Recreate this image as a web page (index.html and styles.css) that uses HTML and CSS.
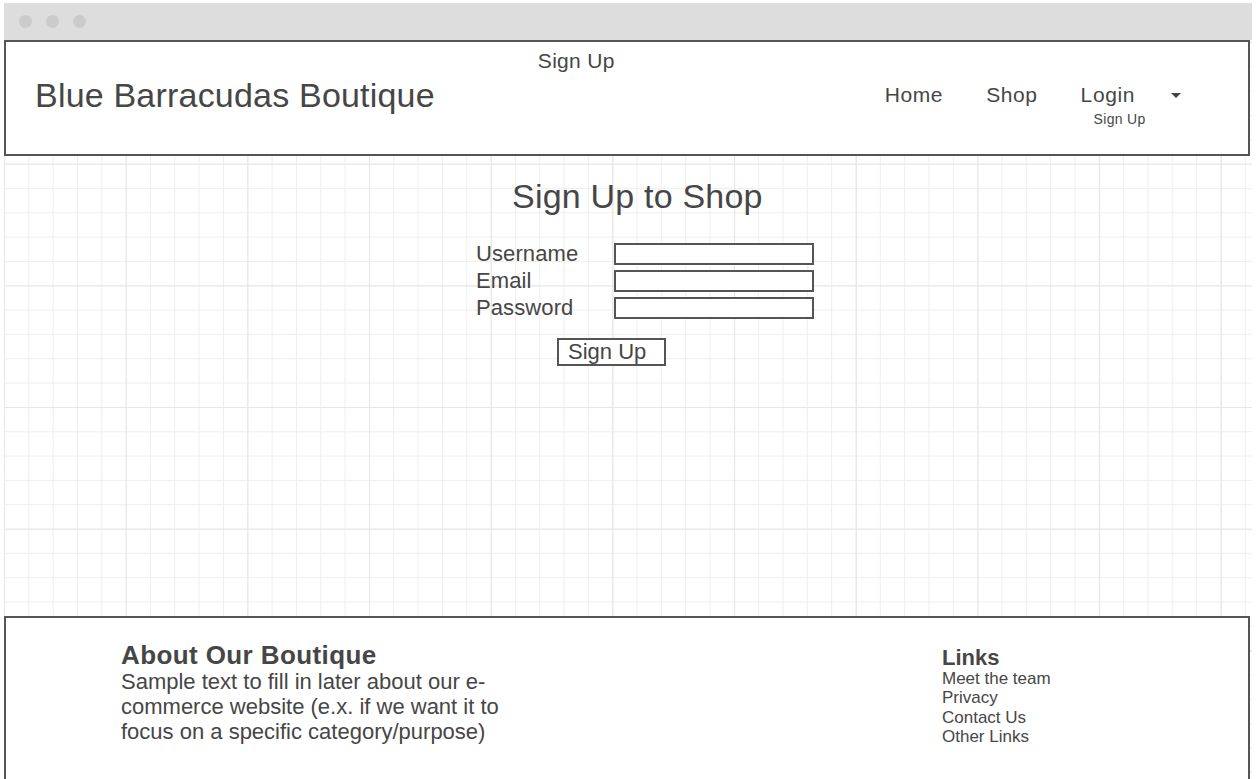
FILE: index.html
```html
<!DOCTYPE html>
<html lang="en">
<head>
<meta charset="utf-8">
<title>Blue Barracudas Boutique - Sign Up</title>
<link rel="stylesheet" href="styles.css">
</head>
<body>
<div class="window">
  <div class="chrome">
    <span class="dot"></span><span class="dot"></span><span class="dot"></span>
  </div>
  <div class="canvas">
    <header class="site-header">
      <div class="brand">Blue Barracudas Boutique</div>
      <div class="top-link">Sign Up</div>
      <nav class="nav">
        <a class="nav-item">Home</a>
        <a class="nav-item">Shop</a>
        <div class="nav-item login">Login
          <div class="submenu">Sign Up</div>
        </div>
        <span class="caret"></span>
      </nav>
    </header>
    <main class="main">
      <div class="content">
        <h1 class="title">Sign Up to Shop</h1>
        <form class="form">
          <label class="label">Username</label><span class="field"></span>
          <label class="label">Email</label><span class="field"></span>
          <label class="label">Password</label><span class="field"></span>
        </form>
        <div class="button">Sign Up</div>
      </div>
    </main>
    <footer class="site-footer">
      <div class="about">
        <h2 class="about-title">About Our Boutique</h2>
        <p class="about-text">Sample text to fill in later about our e-commerce website (e.x. if we want it to focus on a specific category/purpose)</p>
      </div>
      <div class="links">
        <h3 class="links-title">Links</h3>
        <ul class="link-list">
          <li>Meet the team</li>
          <li>Privacy</li>
          <li>Contact Us</li>
          <li>Other Links</li>
        </ul>
      </div>
    </footer>
  </div>
</div>
</body>
</html>
```

FILE: styles.css
```css
* { box-sizing: border-box; }
html, body { margin: 0; padding: 0; background: #ffffff; }
body {
  font-family: "Liberation Sans", Arial, sans-serif;
  color: #464646;
  overflow: hidden;
  height: 779px;
}
.window {
  margin: 3px 8px 0 4px;
  width: 1248px;
}
.chrome {
  height: 37px;
  background: #dddddd;
  display: flex;
  align-items: center;
  gap: 14px;
  padding-left: 15px;
  padding-bottom: 1px;
}
.dot {
  width: 13px;
  height: 13px;
  border-radius: 50%;
  background: #cbcbcb;
}
.canvas {
  height: 739px;
  background-color: #ffffff;
  background-image:
    linear-gradient(to right, #e6e6e6 1px, transparent 1px),
    linear-gradient(to bottom, #e6e6e6 1px, transparent 1px),
    linear-gradient(to right, #eeeeee 1px, transparent 1px),
    linear-gradient(to bottom, #eeeeee 1px, transparent 1px);
  background-size: 121.7px 121.7px, 121.7px 121.7px, 24.34px 24.34px, 24.34px 24.34px;
  background-position: 0 2px, 0 2px, 0 2px, 0 2px;
}
.site-header {
  height: 116px;
  width: 1246px;
  background: #ffffff;
  border: 2px solid #555555;
  display: flex;
  align-items: center;
  padding-left: 29px;
  position: relative;
}
.brand {
  font-size: 34px;
  letter-spacing: 0.2px;
  margin-top: -6px;
}
.top-link {
  align-self: flex-start;
  font-size: 21px;
  margin-top: 7px;
  margin-left: 103px;
  letter-spacing: 0.3px;
}
.nav {
  margin-left: auto;
  display: flex;
  align-items: center;
  gap: 43px;
  padding-right: 67px;
  margin-top: -6px;
}
.nav-item {
  font-size: 21px;
  letter-spacing: 0.6px;
  color: #464646;
}
.login { position: relative; }
.submenu {
  position: absolute;
  left: 13px;
  top: 28px;
  font-size: 14px;
  letter-spacing: 0.3px;
  white-space: nowrap;
}
.caret {
  width: 0;
  height: 0;
  border-left: 5px solid transparent;
  border-right: 5px solid transparent;
  border-top: 5px solid #444444;
  margin-left: -7px;
}
.main {
  height: 460px;
  padding-top: 20px;
}
.content {
  margin-left: 472px;
  width: 340px;
}
.title {
  margin: 0 0 0 36px;
  font-size: 34px;
  font-weight: normal;
  line-height: 40px;
  letter-spacing: 0.2px;
  white-space: nowrap;
}
.form {
  margin: 27px 0 0 0;
  display: grid;
  grid-template-columns: 138px 200px;
  grid-auto-rows: 22px;
  row-gap: 5px;
  align-items: center;
}
.label {
  font-size: 22px;
  line-height: 22px;
  letter-spacing: 0.1px;
}
.field {
  height: 22px;
  border: 2px solid #555555;
  background: #ffffff;
}
.button {
  margin: 19px 0 0 81px;
  width: 109px;
  height: 28px;
  border: 2px solid #555555;
  background: #ffffff;
  font-size: 22px;
  line-height: 24px;
  padding-left: 9px;
}
.site-footer {
  width: 1246px;
  height: 163px;
  background: #ffffff;
  border: 2px solid #555555;
  border-bottom: none;
  display: grid;
  grid-template-columns: 821px auto;
  padding: 23px 0 0 115px;
}
.about-title {
  margin: 0;
  font-size: 26px;
  line-height: 28px;
  font-weight: bold;
  letter-spacing: 0.4px;
}
.about-text {
  margin: 0;
  width: 400px;
  font-size: 22px;
  line-height: 25px;
}
.links { padding-top: 5px; }
.links-title {
  margin: 0;
  font-size: 22px;
  line-height: 23px;
  font-weight: bold;
}
.link-list {
  margin: 0;
  padding: 0;
  list-style: none;
  font-size: 17px;
  line-height: 19.3px;
}
```
